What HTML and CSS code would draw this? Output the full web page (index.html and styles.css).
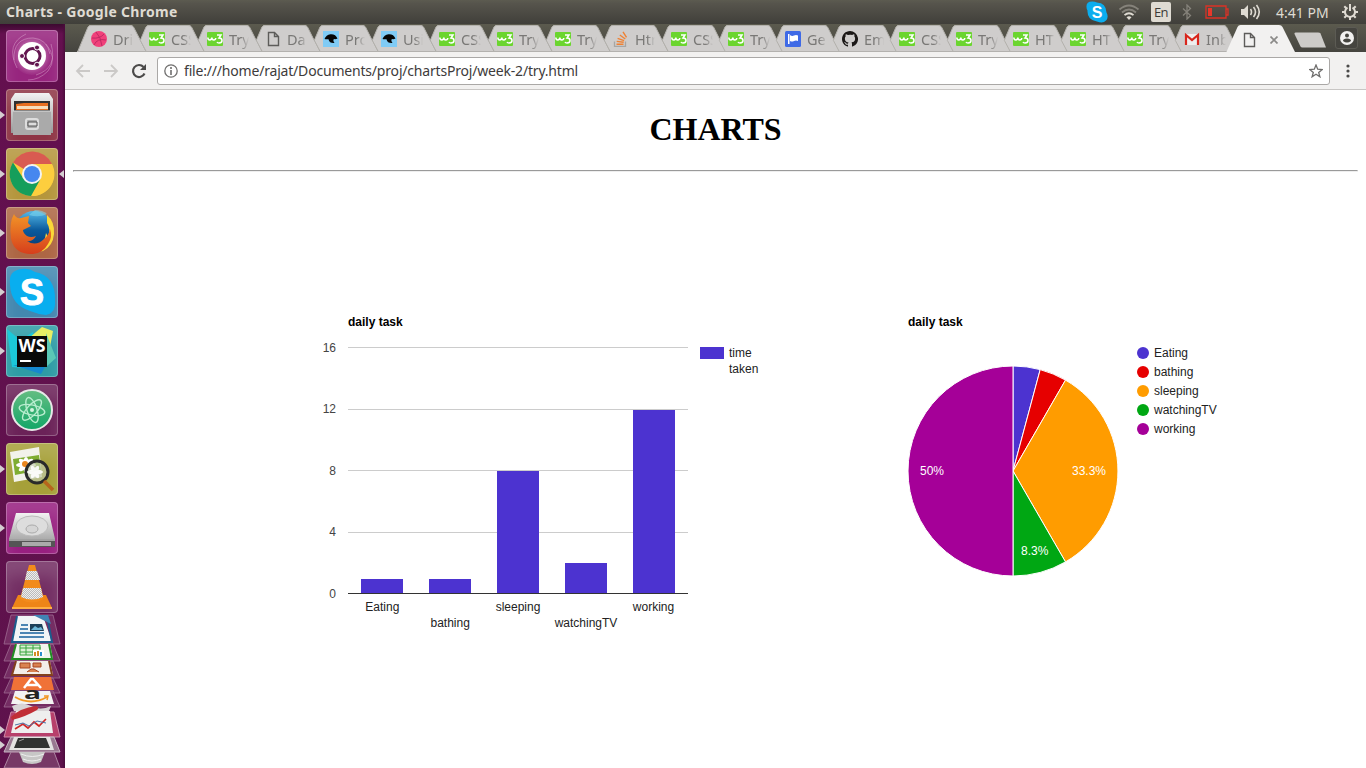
FILE: index.html
```
<!DOCTYPE html>
<html lang="en">
<head>
<meta charset="utf-8">
<title>Charts</title>
<link rel="stylesheet" href="styles.css">
</head>
<body>
<svg class="defs" width="0" height="0">
  <defs>
    <symbol id="tab-first" viewBox="0 0 72 28"><path d="M.5 28.500 11 3Q12 1 14 1H53Q55.500 1 56.500 3L69.500 28.500Z" fill="#cfcdcc"/><path d="M.5 28 11 3Q12 1.500 14 1.500H53Q55.500 1.500 56.500 3L69.500 28" fill="none" stroke="#b3b1ac"/><path d="M0 27.500H70" stroke="#b3b1ae"/></symbol>
    <symbol id="tab" viewBox="0 0 72 28"><path d="M11.500 28.500 5.300 16.300 11 3Q12 1 14 1H53Q55.500 1 56.500 3L69.500 28.500Z" fill="#cfcdcc"/><path d="M11.500 28 5.300 16.300 11 3Q12 1.500 14 1.500H53Q55.500 1.500 56.500 3L63 16" fill="none" stroke="#b3b1ac"/><path d="M11 27.500H70" stroke="#b3b1ae"/></symbol>
    <symbol id="w3" viewBox="0 0 16 16"><rect y="1" width="16" height="14" rx="1" fill="#6bd52f"/><path d="M.8 6.500q.2 2.500 2 2.500t2-2.500q.2 2.500 2 2.500t2-2M10 4h4l-2 3q3 0 3 2.500T12 12q-1.500 0-2-1" fill="none" stroke="#fff" stroke-width="1.500"/></symbol>
    <symbol id="page" viewBox="0 0 16 16"><path d="M3.500 1.500h6l4 4v9h-10zM9.500 1.500v4h4" fill="none" stroke="#5d5c5a" stroke-width="1.400"/></symbol>
    <symbol id="dribbble" viewBox="0 0 16 16"><circle cx="8" cy="8" r="8" fill="#f0407a"/><path d="M5 1q5 5 6 14M1 7q8 1 12-4M3 14q3-7 12-5" fill="none" stroke="#c02a64"/></symbol>
    <symbol id="bird" viewBox="0 0 16 16"><path fill="#80cbf5" d="M0 0h16v16H0z"/><path d="M1.500 8Q3 4 7.500 3.200q5-.4 7 4.300-2 1-3.500.500Q9.500 9 11.500 12 6.500 12.500 5.500 8.200 3 8.500 1.500 8z" fill="#050505"/></symbol>
    <symbol id="stack" viewBox="0 0 16 16"><path d="M1.500 10.500v5h11v-5" fill="none" stroke="#a7a6a4" stroke-width="1.300"/><path d="M3.500 13.200h7M3.700 10.400l7 .8M4.600 7.300l6.500 2.300M6.800 4l5.500 4M10 .8l3.500 5.500" stroke="#ef8234" stroke-width="1.400"/></symbol>
    <symbol id="flag" viewBox="0 0 16 16"><rect width="16" height="16" rx="1.500" fill="#3f6ae6"/><path d="M3 3h1.500v10H3zM5 4q2 1.500 4 .5t4 0v5.500q-2-1-4 0t-4 0z" fill="#fff"/></symbol>
    <symbol id="github" viewBox="0 0 16 16"><path fill="#1b1817" fill-rule="evenodd" d="M8 0C3.580 0 0 3.580 0 8c0 3.540 2.290 6.530 5.470 7.590.4.070.55-.17.55-.38v-1.490c-2.230.48-2.700-1.070-2.700-1.070-.36-.92-.89-1.170-.89-1.170-.73-.5.050-.49.050-.49.800.06 1.230.83 1.230.83.710 1.230 1.870.87 2.330.67.070-.52.280-.88.500-1.080-1.780-.2-3.640-.88-3.640-3.950 0-.87.310-1.590.83-2.150-.1-.2-.36-1.010.07-2.120 0 0 .68-.21 2.200.82A7.600 7.600 0 0 1 8 3.740c.68 0 1.360.09 2 .27 1.520-1.030 2.200-.82 2.200-.82.430 1.110.17 1.920.07 2.120.52.560.83 1.280.83 2.150 0 3.080-1.870 3.750-3.650 3.950.29.250.54.730.54 1.480v2.320c0 .21.150.46.550.38A8 8 0 0 0 8 0z"/></symbol>
    <symbol id="gmail" viewBox="0 0 16 16"><path fill="#eee" d="M2 3h12v11H2z"/><path d="M2 14V4l6 5 6-5v10" fill="none" stroke="#d9261c" stroke-width="2.200"/></symbol>
    <linearGradient id="silver" x2="0" y2="1"><stop stop-color="#f2f2f2"/><stop offset="1" stop-color="#999"/></linearGradient>
    <linearGradient id="flame" x2="0" y2="1"><stop stop-color="#f29427"/><stop offset="1" stop-color="#d63e1c"/></linearGradient>
    <linearGradient id="globe" x2="0" y2="1"><stop stop-color="#55b9e8"/><stop offset=".5" stop-color="#0b5a9c"/><stop offset="1" stop-color="#083a75"/></linearGradient>
    <linearGradient id="green" x2="0" y2="1"><stop stop-color="#65bd82"/><stop offset="1" stop-color="#12a667"/></linearGradient>
    <radialGradient id="swirl"><stop offset=".5" stop-color="#e7b9dc"/><stop offset="1" stop-color="#b75aa2" stop-opacity=".2"/></radialGradient>
    <pattern id="check" width="2" height="2" patternUnits="userSpaceOnUse"><path fill="#eee" d="M0 0h2v2H0z"/><path fill="#bbb" d="M0 0h1v1H0zM1 1h1v1H1z"/></pattern>
  </defs>
</svg>

<header class="panel">
  <span class="panel-title">Charts - Google Chrome</span>
  <div class="indicators">
    <svg class="i-skype" width="22" height="22" viewBox="0 0 22 22"><path d="M6 .5Q0 .5.500 6q0 2 1 3.500Q1 19 11 20.500q6 2.500 9-1t.5-8Q20 2 11 1.500 8.500.3 6 .5z" fill="#0badee"/><text x="11" y="17" text-anchor="middle" class="skype-letter">S</text></svg>
    <svg class="i-wifi" width="22" height="18" viewBox="0 0 22 18"><g fill="none" stroke-width="1.800"><path d="M1.500 6.500q9.500-8 19 0" stroke="#85827a"/><path d="M4 9.500q7-6 14 0" stroke="#85827a"/><path d="M6.500 12.200q4.500-4 9 0" stroke="#dfdbd2"/></g><path d="M8.500 14.200q2.500-2 5 0L11 17z" fill="#dfdbd2"/></svg>
    <span class="lang">En</span>
    <svg class="i-bt" width="10" height="16" viewBox="0 0 10 16"><path d="M1 4.500 8.500 11.500 5 15V1l3.500 3.500L1 11.500" fill="none" stroke="#85827a" stroke-width="1.300"/></svg>
    <svg class="i-bat" width="24" height="14" viewBox="0 0 24 14"><path d="M1 1h20v12H1zM21 4h2v6h-2" fill="none" stroke="#dc3226" stroke-width="1.300"/><path d="M3 3h4v8H3z" fill="#e8372a"/></svg>
    <svg class="i-vol" width="21" height="16" viewBox="0 0 21 16"><path d="M1 5h3l4-4v14l-4-4H1z" fill="#dfdbd2"/><path d="M10.500 5q2 3 0 6M13.500 3q4 5 0 10M16.500 1q5.500 7 0 14" fill="none" stroke="#dfdbd2" stroke-width="1.600"/></svg>
    <span class="clock">4:41 PM</span>
    <svg class="i-gear" width="16" height="16" viewBox="0 0 16 16"><path d="M5.500 3.600a5 5 0 1 0 5 0" fill="none" stroke="#dfdbd2" stroke-width="2"/><path d="M8 0v7M0 8h3M13 8h3M2.300 2.300l2 2M13.700 2.300l-2 2M2.300 13.700l2-2M13.700 13.700l-2-2M8 13v3" stroke="#dfdbd2" stroke-width="2"/></svg>
  </div>
</header>

<main class="desktop">
  <nav class="dock">
    <div class="app ubuntu"><svg viewBox="0 0 52 52"><circle cx="26" cy="26" r="19" fill="url(#swirl)" opacity=".7"/><g fill="none" stroke="#dca9cf" stroke-width=".8" opacity=".6"><path d="M8 30Q7 8 27 8q14 1 17 16M40 14q12 14 2 27-9 9-20 9M11 38Q-1 14 20 4M30 45Q52 38 45 14"/></g><circle cx="26" cy="26" r="14" fill="#fff"/><circle cx="26.500" cy="26" r="7.500" fill="none" stroke="#631650" stroke-width="3"/><g fill="#631650" stroke="#fff"><circle cx="16" cy="26" r="2.500"/><circle cx="31" cy="17.500" r="2.500"/><circle cx="31" cy="34.700" r="2.500"/></g></svg></div>
    <div class="app files running"><svg viewBox="0 0 52 52"><path d="M9 4h34l4 6v34H5V10z" fill="url(#silver)"/><path d="M8 12h36v10H8z" fill="#303030"/><path d="M10 15l8-1h24v7H10z" fill="#e86f20"/><path d="M11 17h31v3H11z" fill="#f7ddbb"/><path d="M7 22h38v24H7z" fill="#aaa"/><path d="M7 22h38" stroke="#ddd"/><rect x="20" y="30" width="12" height="10" rx="2" fill="#aaa" stroke="#ddd" stroke-width="2"/><path d="M22 33h9v4h-9z" fill="#ddd" stroke="#555"/></svg></div>
    <div class="app chrome running focused"><svg viewBox="0 0 52 52"><circle cx="26" cy="26" r="22" fill="#fdce3e"/><path d="M26 26 7 14.500A22 22 0 0 1 46 16H26z" fill="#d95b51"/><path d="M7 14.500A22 22 0 0 0 25 48L34 32 26 26 17 30z" fill="#159e5b"/><path d="M26 48 35 31 26 26V16h20A22 22 0 0 1 26 48" fill="#fdce3e"/><circle cx="26" cy="26" r="10" fill="#f3f3f3"/><circle cx="26" cy="26" r="8" fill="#4687ef"/></svg></div>
    <div class="app firefox running"><svg viewBox="0 0 52 52"><circle cx="28" cy="23" r="19" fill="url(#globe)"/><path d="M23 8q10 3 18-1-4-4-12-4z" fill="#7ad2eb" opacity=".6"/><path d="M41 8q8 7 7 19-1 12-11 17-4 1-6-2 8-6 9-16l2 4q3-8-1-14z" fill="#fbd838"/><path d="M8 7q2 5 7 4l8-2-1 7 3 3-8 4q0 3 4 6 4 2 9 0-3 6-9 5 9 6 17-2 5-4 6-10 3 8-2 15-5 9-15 10Q9 48 5 32 3 15 8 7z" fill="url(#flame)"/></svg></div>
    <div class="app skype running"><svg viewBox="0 0 52 52"><path d="M16 3Q2 4 4 19q1 20 20 26 7 3 16 4 10-2 9-14Q50 10 29 6q-6-4-13-3z" fill="#09aeef"/><text x="26" y="39" text-anchor="middle" class="skype-big">S</text></svg></div>
    <div class="app webstorm running"><svg viewBox="0 0 52 52"><path d="M1 4 14 15l13-8 9 38-30-3z" fill="#1bc8d9"/><path d="M23 13 36 2l11 4-3 16z" fill="#e7ef65"/><path d="M40 8l10 25-10 9z" fill="#5bc8b5"/><path d="M7 40l28 9 5-9z" fill="#1688ce"/><path d="M11 11h30v31H11z" fill="#090909"/><text x="12.500" y="27" textLength="27" lengthAdjust="spacingAndGlyphs" class="ws">WS</text><path d="M14 36h11" stroke="#fff" stroke-width="2"/></svg></div>
    <div class="app atom"><svg viewBox="0 0 52 52"><circle cx="26" cy="26" r="20" fill="url(#green)" stroke="#e7e9e8" stroke-width="2"/><g fill="none" stroke="#b8edcf" stroke-width="1.400"><ellipse cx="26" cy="26" rx="5" ry="13" transform="rotate(-18 26 26)"/><ellipse cx="26" cy="26" rx="5" ry="13" transform="rotate(42 26 26)"/><ellipse cx="26" cy="26" rx="5" ry="13" transform="rotate(102 26 26)"/></g><circle cx="26" cy="26" r="2" fill="#d4f5e0"/></svg></div>
    <div class="app viewer running"><svg viewBox="0 0 52 52"><path d="M4 9 33 4l3 30-28 5z" fill="#f2f2eb"/><path d="m7 16 26-4 2 15-26 5z" fill="#7fad32"/><g fill="#fff"><ellipse cx="20" cy="22" rx="10" ry="3"/><ellipse cx="20" cy="22" rx="3" ry="8"/><ellipse cx="20" cy="22" rx="3" ry="9" transform="rotate(50 20 22)"/><ellipse cx="20" cy="22" rx="3" ry="9" transform="rotate(-50 20 22)"/></g><circle cx="19" cy="21" r="3" fill="#e9861f"/><circle cx="31" cy="29" r="11" fill="#c0cba9" fill-opacity=".7" stroke="#292a2a" stroke-width="3"/><g fill="#fff" opacity=".9"><ellipse cx="29" cy="29" rx="8" ry="2.500"/><ellipse cx="29" cy="29" rx="7" ry="2.500" transform="rotate(60 29 29)"/><ellipse cx="29" cy="29" rx="7" ry="2.500" transform="rotate(-60 29 29)"/></g><path d="m38 38 9 9" stroke="#b6651c" stroke-width="3.500"/></svg></div>
    <div class="app drive running"><svg viewBox="0 0 52 52"><path d="M10 11h33l6 26v7H3v-7z" fill="url(#silver)"/><path d="M3 37h46v8H3z" fill="#555"/><path d="M3 38h46" stroke="#eee"/><path d="M16 40h29v4H16z" fill="#aaa"/><ellipse cx="26" cy="24" rx="16" ry="10" fill="#ddd" stroke="#bbb"/><ellipse cx="26" cy="27" rx="6" ry="4" fill="#d5d5d5" stroke="#aaa"/></svg></div>
    <div class="app vlc"><svg viewBox="0 0 52 52"><path d="m12 34-6 13h40l-6-13z" fill="#ee8517"/><path d="M6 46h40v2H6z" fill="#ffb043"/><path d="M23 4h6l9 34q-12 7-24 0z" fill="#f28b1c"/><path d="M21 10h10l3 9H19zM17 27h18l2 9q-11 5-22 0z" fill="url(#check)"/></svg></div>
    <svg class="pile" width="65" height="155" viewBox="0 613 65 155">
      <g fill="#a16090" fill-opacity=".35" stroke="#9d6a91" stroke-opacity=".8"><path d="M11 615h42l7 29H4zM11 644h42l7 17H4zM11 661h42l7 17H4zM11 678h42l7 15H4zM11 691h42l7 16H4z"/></g>
      <path d="M17 616h26l9 26H12z" fill="#f2f5f7"/><path d="M17 616 12 642H52L47 616" fill="none" stroke="#1b5c8d" stroke-width="2"/><path d="M33 615h15l3 9-10-5z" fill="#4184b4"/><path d="M21 625h7M20 629h8M20 633h24M19 637h25" stroke="#17609d" stroke-width="1.500"/><path d="M30 624h12l2 7H30z" fill="#1d4059"/><path d="m31 630 4-4 3 2 3-1 2 3z" fill="#6cb6d7"/>
      <path d="M16 644h34l3 15H12z" fill="#f0f4ed"/><path d="M16 644 12 659H52L49 644" fill="none" stroke="#218c24" stroke-width="2"/><path d="M20 645h20v10H20zM20 648h21M20 652h21M26 645v10M33 645v10" fill="#dcefd5" stroke="#37a43c"/><path d="M33 650h11v6H33z" fill="#fff"/><path d="M35 656v-4M38 656v-5" stroke="#d58b23" stroke-width="2"/><path d="M41 656v-4" stroke="#2a8fd0" stroke-width="2"/>
      <path d="M16 661h34l3 14H12z" fill="#f3eee9"/><path d="M16 661 12 675H52L49 661" fill="none" stroke="#83401d" stroke-width="2"/><path d="M20 663h10v5H20zM33 663h8v4h-8zM27 672l4-3h3l5 3" fill="#d98351" stroke="#a54421"/>
      <path d="M14 677h37l3 13H11z" fill="#f07237"/><path d="M24 688 31 679h2l8 9M27 685h11" fill="none" stroke="#fff" stroke-width="2.500"/>
      <path d="M15 691h35l4 13H11z" fill="#f3f3f3"/><text x="24" y="699" textLength="17" lengthAdjust="spacingAndGlyphs" class="amazon">a</text><path d="M15 697q16 9 32 0" fill="none" stroke="#f29824" stroke-width="2"/><path d="m44 696h4l-1 4" fill="none" stroke="#f29824" stroke-width="1.500"/>
      <path d="M12 706q10-5 19 0t20 0l-2 5H14z" fill="#d8d4d6"/>
      <path d="M11 712h43l6 25H4z" fill="#b7406b" stroke="#cd8caa"/><path d="M16 711h34l3 22H11z" fill="#eee"/><path d="m15 729 8-5 5 4 6-6 5 4 7-7" fill="none" stroke="#d02828" stroke-width="1.700"/><path d="m15 725 8-2 6 3 8-5 9 2" fill="none" stroke="#4d72a6"/><path d="M11 717Q20 708 36 706q4 1 1 4-12 7-25 10z" fill="#c12e36"/>
      <path d="M11 737h43l6 15H4z" fill="#a893a2" fill-opacity=".8" stroke="#c7b6c2"/><path d="M14 737h36l4 13H9z" fill="#e3e3e1"/><path d="M18 738h28l4 10H14z" fill="#303331"/><path d="m19 741 5-2" stroke="#999"/>
      <path d="M11 752h43l6 16H4z" fill="#895478" fill-opacity=".6" stroke="#ad86a2"/><path d="M19 752h26l-4 10q-9 4-18 0z" fill="#c7c7c6"/><path d="M21 754q11 5 23 0M23 759q9 4 18 0" stroke="#eee" fill="none"/>
      <path d="m0 726 5 4-5 4zM0 741l5 4-5 4z" fill="#d4ced1"/>
    </svg>
  </nav>

  <section class="browser">
    <div class="tabstrip">
      <div class="tab"><svg class="shape"><use href="#tab-first"/></svg><svg class="fav"><use href="#dribbble"/></svg><span>Dri</span></div>
      <div class="tab"><svg class="shape"><use href="#tab"/></svg><svg class="fav"><use href="#w3"/></svg><span>CSS</span></div>
      <div class="tab"><svg class="shape"><use href="#tab"/></svg><svg class="fav"><use href="#w3"/></svg><span>Try</span></div>
      <div class="tab"><svg class="shape"><use href="#tab"/></svg><svg class="fav"><use href="#page"/></svg><span>Da</span></div>
      <div class="tab"><svg class="shape"><use href="#tab"/></svg><svg class="fav"><use href="#bird"/></svg><span>Pro</span></div>
      <div class="tab"><svg class="shape"><use href="#tab"/></svg><svg class="fav"><use href="#bird"/></svg><span>Usi</span></div>
      <div class="tab"><svg class="shape"><use href="#tab"/></svg><svg class="fav"><use href="#w3"/></svg><span>CSS</span></div>
      <div class="tab"><svg class="shape"><use href="#tab"/></svg><svg class="fav"><use href="#w3"/></svg><span>Try</span></div>
      <div class="tab"><svg class="shape"><use href="#tab"/></svg><svg class="fav"><use href="#w3"/></svg><span>Try</span></div>
      <div class="tab"><svg class="shape"><use href="#tab"/></svg><svg class="fav"><use href="#stack"/></svg><span>Htm</span></div>
      <div class="tab narrow"><svg class="shape"><use href="#tab"/></svg><svg class="fav"><use href="#w3"/></svg><span>CSS</span></div>
      <div class="tab narrow"><svg class="shape"><use href="#tab"/></svg><svg class="fav"><use href="#w3"/></svg><span>Try</span></div>
      <div class="tab narrow"><svg class="shape"><use href="#tab"/></svg><svg class="fav"><use href="#flag"/></svg><span>Ge</span></div>
      <div class="tab narrow"><svg class="shape"><use href="#tab"/></svg><svg class="fav"><use href="#github"/></svg><span>Em</span></div>
      <div class="tab narrow"><svg class="shape"><use href="#tab"/></svg><svg class="fav"><use href="#w3"/></svg><span>CSS</span></div>
      <div class="tab narrow"><svg class="shape"><use href="#tab"/></svg><svg class="fav"><use href="#w3"/></svg><span>Try</span></div>
      <div class="tab narrow"><svg class="shape"><use href="#tab"/></svg><svg class="fav"><use href="#w3"/></svg><span>HT</span></div>
      <div class="tab narrow"><svg class="shape"><use href="#tab"/></svg><svg class="fav"><use href="#w3"/></svg><span>HT</span></div>
      <div class="tab narrow"><svg class="shape"><use href="#tab"/></svg><svg class="fav"><use href="#w3"/></svg><span>Try</span></div>
      <div class="tab narrow"><svg class="shape"><use href="#tab"/></svg><svg class="fav"><use href="#gmail"/></svg><span>Inb</span></div>
      <div class="tab active"><svg class="shape" viewBox="0 0 72 29"><path d="M0 29 11.500 3Q12.500 1 14.500 1H53Q55.500 1 56.500 3L69.500 29Z" fill="#f2f1f0"/></svg><svg class="fav"><use href="#page"/></svg><svg class="close" viewBox="0 0 8 8"><path d="M.5.500l7 7M7.500.500l-7 7" stroke="#8b8a88" stroke-width="1.700"/></svg></div>
      <svg class="newtab" width="34" height="16" viewBox="0 0 34 16"><path d="M2.500.5H25q2 0 2.500 1L33 15.500H9.500q-1.500 0-2-1L1.500 2q-.5-1.500 1-1.500z" fill="#cdcbc9"/></svg>
      <div class="profile"><svg width="14" height="14" viewBox="0 0 14 14"><circle cx="7" cy="7" r="7" fill="#f1f0ef"/><circle cx="7" cy="4.500" r="2" fill="#45443f"/><path d="M3 10q0-2.500 4-2.500T11 10q-4 3-8 0z" fill="#45443f"/></svg></div>
    </div>
    <div class="toolbar">
      <svg class="nav-icon" viewBox="0 0 16 16"><path d="M15 8H2M8 2 2 8l6 6" fill="none" stroke="#cbc9c7" stroke-width="1.800"/></svg>
      <svg class="nav-icon" viewBox="0 0 16 16"><path d="M1 8h13M8 2l6 6-6 6" fill="none" stroke="#cbc9c7" stroke-width="1.800"/></svg>
      <svg class="nav-icon" viewBox="0 0 16 16"><path d="M13.500 10.500A6 6 0 1 1 12.500 4" fill="none" stroke="#4b4a49" stroke-width="2.200"/><path d="M15 1v6H9z" fill="#4b4a49"/></svg>
      <div class="omnibox">
        <svg width="14" height="14" viewBox="0 0 14 14"><circle cx="7" cy="7" r="6.200" fill="none" stroke="#706f6e" stroke-width="1.300"/><path d="M7 3v2M7 6v5" stroke="#706f6e" stroke-width="1.600"/></svg>
        <span class="url">file:///home/rajat/Documents/proj/chartsProj/week-2/try.html</span>
        <svg width="14" height="14" viewBox="0 0 14 14"><path d="m7 1 1.700 4.200 4.500.300-3.500 2.900 1.200 4.400L7 10.300l-3.900 2.500 1.200-4.400L.8 5.500l4.500-.300z" fill="none" stroke="#6f6e6d" stroke-width="1.300"/></svg>
      </div>
      <svg class="menu" width="4" height="14" viewBox="0 0 4 14"><g fill="#4b4a49"><circle cx="2" cy="2" r="1.600"/><circle cx="2" cy="7" r="1.600"/><circle cx="2" cy="12" r="1.600"/></g></svg>
    </div>
    <article class="page">
      <h1>CHARTS</h1>
      <hr>
      <div class="charts">
        <svg class="chart" width="460" height="330" viewBox="310 310 460 330">
          <text class="title" x="348" y="326">daily task</text>
          <g fill="#ccc"><rect x="348" y="347" width="340" height="1"/><rect x="348" y="409" width="340" height="1"/><rect x="348" y="470" width="340" height="1"/><rect x="348" y="532" width="340" height="1"/></g>
          <g fill="#4c33d0"><rect x="361" y="579" width="42" height="14"/><rect x="429" y="579" width="42" height="14"/><rect x="497" y="471" width="42" height="122"/><rect x="565" y="563" width="42" height="30"/><rect x="633" y="410" width="42" height="183"/><rect x="700" y="347" width="24" height="12"/></g>
          <rect x="348" y="593" width="340" height="1" fill="#333"/>
          <g class="axis"><text x="336" y="352">16</text><text x="336" y="413">12</text><text x="336" y="475">8</text><text x="336" y="536">4</text><text x="336" y="598">0</text></g>
          <g class="cat"><text x="382.300" y="611">Eating</text><text x="450.200" y="627">bathing</text><text x="518" y="611">sleeping</text><text x="586" y="627">watchingTV</text><text x="653.500" y="611">working</text></g>
          <text x="729" y="357">time</text><text x="729" y="373">taken</text>
        </svg>
        <svg class="chart" width="330" height="275" viewBox="900 310 330 275">
          <text class="title" x="908" y="326">daily task</text>
          <g stroke="#fff"><path d="M1013 471V366A105 105 0 0 1 1040.200 369.600z" fill="#4c33d0"/><path d="m1013 471 27.200-101.400a105 105 0 0 1 25.300 10.500z" fill="#e60000"/><path d="m1013 471 52.500-90.900a105 105 0 0 1 0 181.800z" fill="#ff9c00"/><path d="m1013 471 52.500 90.900A105 105 0 0 1 1013 576z" fill="#00a713"/><path d="M1013 471v105a105 105 0 0 1 0-210z" fill="#a50098"/></g>
          <g class="pct"><text x="932" y="475">50%</text><text x="1089" y="475">33.3%</text><text x="1034.700" y="555">8.3%</text></g>
          <circle cx="1143" cy="353" r="6" fill="#4c33d0"/><text x="1154" y="357">Eating</text>
          <circle cx="1143" cy="372" r="6" fill="#e60000"/><text x="1154" y="376">bathing</text>
          <circle cx="1143" cy="391" r="6" fill="#ff9c00"/><text x="1154" y="395">sleeping</text>
          <circle cx="1143" cy="410" r="6" fill="#00a713"/><text x="1154" y="414">watchingTV</text>
          <circle cx="1143" cy="429" r="6" fill="#a50098"/><text x="1154" y="433">working</text>
        </svg>
      </div>
    </article>
  </section>
</main>
</body>
</html>
```
FILE: styles.css
```
* { box-sizing: border-box; }
body { margin: 0; width: 1366px; height: 768px; overflow: hidden; display: flex; flex-direction: column; font-family: "Noto Sans", sans-serif; }
svg { flex: none; display: block; }
.defs { position: absolute; }

.panel { height: 24px; flex: none; display: flex; align-items: center; justify-content: space-between; padding: 0 8px 0 6px; background: linear-gradient(#5c5b50, #56544c 15%, #403f3a); color: #dfdbd2; }
.panel-title { font-size: 14px; font-weight: 700; line-height: 22px; letter-spacing: .3px; }
.indicators { display: flex; align-items: center; }
.i-wifi { margin-left: 10px; }
.lang { margin-left: 11px; width: 20px; height: 20px; border-radius: 2px; background: #dfdbd2; color: #3c3b37; font: 13px/21px "Open Sans", sans-serif; text-align: center; letter-spacing: -.5px; }
.i-bt { margin-left: 11px; }
.i-bat { margin-left: 13px; }
.i-vol { margin-left: 11px; }
.clock { margin-left: 15px; width: 54px; font-size: 14px; line-height: 23px; letter-spacing: 0; white-space: nowrap; }
.i-gear { margin-left: 12px; }
.skype-letter { font: 700 16px "Liberation Sans", sans-serif; fill: #fff; }

.desktop { display: flex; flex: 1; min-height: 0; }
.dock { width: 65px; flex: none; display: flex; flex-direction: column; align-items: center; gap: 7px; padding-top: 6px; background: linear-gradient(90deg, transparent 62px, #4b0c3c), linear-gradient(#3c0a30, #64104f 10px, #5e124c); }
.app { position: relative; flex: none; width: 52px; height: 52px; margin-right: 1px; border-radius: 4px; box-shadow: inset 0 0 0 1px rgba(255,255,255,.25), inset 0 15px 15px rgba(255,255,255,.14); }
.app svg { width: 52px; height: 52px; }
.running::before { content: ""; position: absolute; left: -6px; top: 22px; border-left: 5px solid #d4ced1; border-top: 4px solid transparent; border-bottom: 4px solid transparent; }
.focused::after { content: ""; position: absolute; right: -6px; top: 22px; border-right: 5px solid #d4ced1; border-top: 4px solid transparent; border-bottom: 4px solid transparent; }
.ubuntu { background: #97257e; }
.files { background: #8e3545; }
.chrome { background: #b5963c; }
.firefox { background: #ad6644; }
.skype { background: #4387af; }
.webstorm { background: #2e9ca5; }
.atom { background: #6b2258; }
.viewer { background: #a6a039; }
.drive { background: #982080; }
.vlc { background: #732e63; }
.pile { margin-top: -7px; }
.skype-big { font: 700 36px "Liberation Sans", sans-serif; fill: #fff; stroke: #fff; stroke-width: 1px; }
.ws { font: 700 17px "Noto Sans", sans-serif; fill: #fff; }
.amazon { font: 700 16px "Open Sans", sans-serif; fill: #222; }

.browser { flex: 1; min-width: 0; display: flex; flex-direction: column; background: #fff; }
.tabstrip { height: 29px; flex: none; display: flex; align-items: flex-start; padding-left: 12px; background: linear-gradient(#5b5a4e, #45443f); isolation: isolate; border-bottom: 1px solid #f2f1f0; }
.tab { position: relative; flex: none; width: 58px; height: 28px; display: flex; align-items: center; gap: 6px; padding: 2px 0 0 14px; }
.narrow { width: 57px; }
.shape { position: absolute; left: 0; top: 0; width: 72px; height: 28px; z-index: -1; }
.fav { width: 16px; height: 16px; }
.tab span { width: 20px; overflow: hidden; white-space: nowrap; font-size: 14.500px; line-height: 20px; color: #797876; -webkit-mask-image: linear-gradient(90deg, #000 60%, transparent); mask-image: linear-gradient(90deg, #000 60%, transparent); }
.active { width: 72px; height: 29px; z-index: 2; margin-left: -1px; padding-left: 15px; gap: 13px; }
.active .shape { height: 29px; }
.close { width: 8px; height: 8px; }
.newtab { margin: 8px 0 0 -5px; }
.profile { margin: 3px 0 0 8px; width: 23px; height: 22px; display: grid; place-items: center; border: 1px solid #5c5b54; border-radius: 3px; background: #45443f; }

.toolbar { height: 37px; flex: none; display: flex; align-items: center; padding: 0 16px 0 10px; background: #f2f1f0; border-bottom: 1px solid #c8c6c4; }
.nav-icon { width: 16px; height: 16px; margin-right: 12px; }
.omnibox { flex: 1; height: 28px; display: flex; align-items: center; gap: 6px; margin: 0 16px 0 -2px; padding: 0 6px; background: #fff; border: 1px solid #aaa8a6; border-radius: 3px; }
.url { flex: 1; font-size: 14px; line-height: 24px; color: #3e3b3b; white-space: nowrap; letter-spacing: -.19px; }

.page { padding: 0 8px; }
h1 { margin: 21px 0 22px; font: 700 32px/37px "Liberation Serif", serif; text-align: center; color: #000; }
hr { margin: 0; border: 1px solid; border-color: #9a9a9a #eee #eee #9a9a9a; }
.charts { display: flex; gap: 130px; padding: 138px 0 0 237px; }
.chart text { font: 12px "Liberation Sans", sans-serif; fill: #222; }
.chart .title { font-weight: 700; fill: #000; }
.axis text { text-anchor: end; fill: #444; }
.cat text { text-anchor: middle; }
.pct text { text-anchor: middle; fill: #fff; }
```
